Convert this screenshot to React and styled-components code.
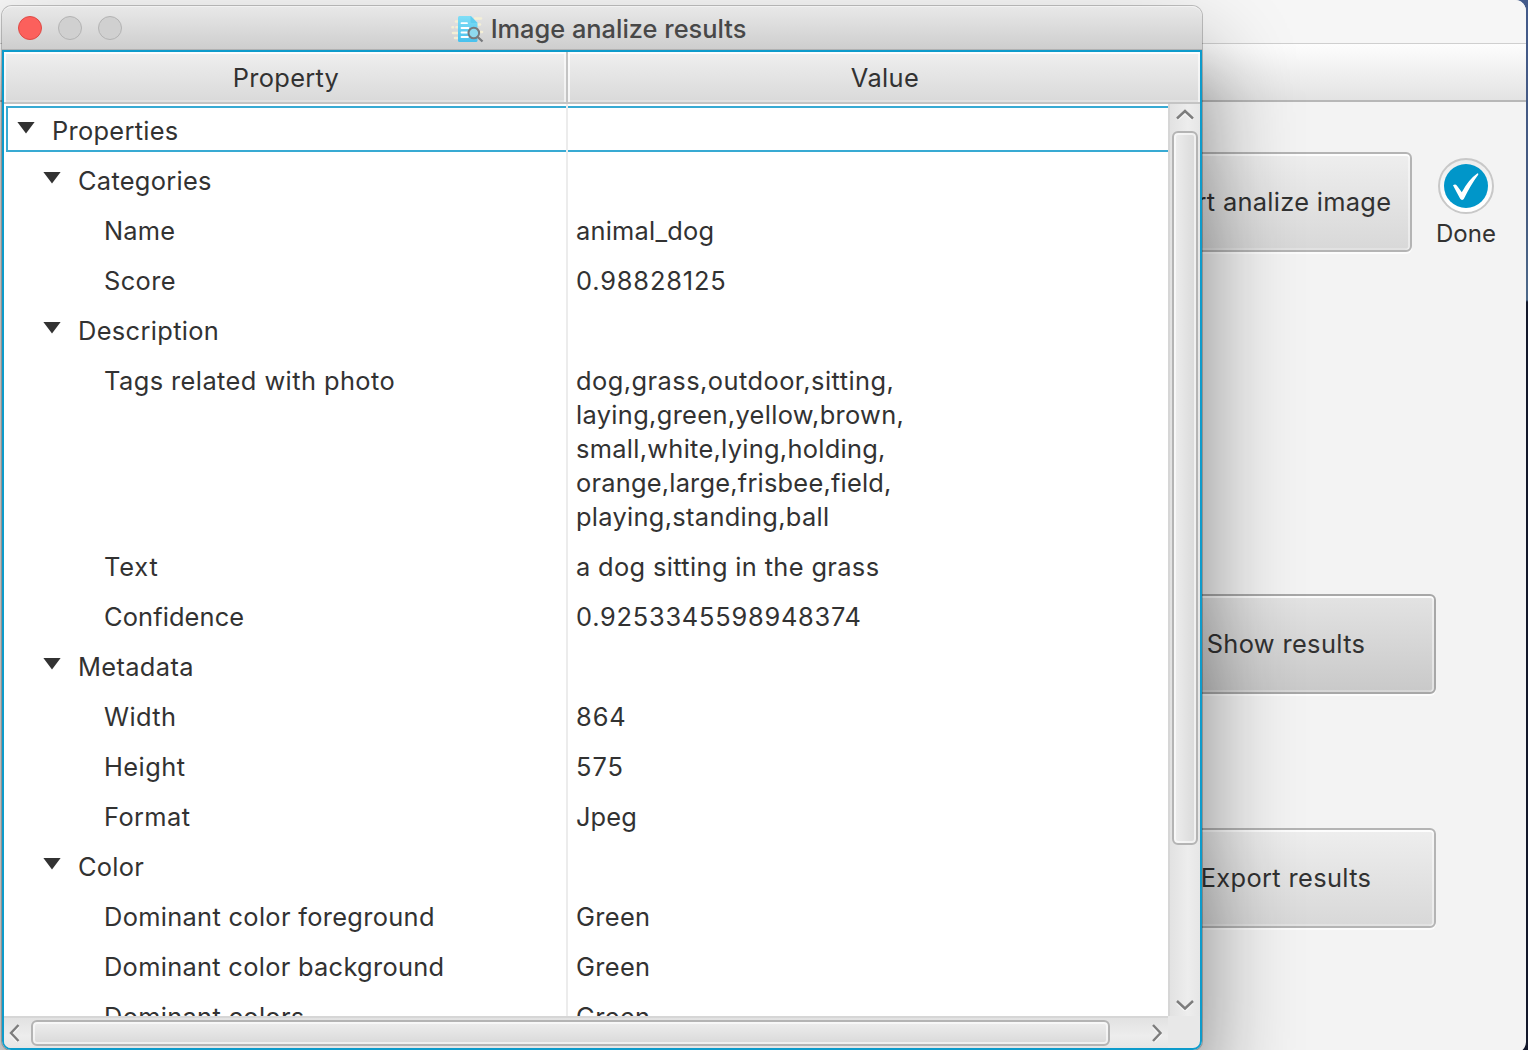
import React from 'react';
import styled, { createGlobalStyle, css } from 'styled-components';

const GlobalStyle = createGlobalStyle`
  * { box-sizing: border-box; }
  body { margin: 0; overflow: hidden; }
`;

const FONT = 'Inter, "Liberation Sans", sans-serif';

const Desktop = styled.main`
  position: relative;
  width: 1528px;
  height: 1050px;
  overflow: hidden;
  background: linear-gradient(#435a8a 0, #44597f 200px, #4c6889 300px, #12172a 302px, #12172a 100%);
  font-family: ${FONT};
  color: #323232;
`;

const Label = styled.span`
  font-size: ${p => p.$size || 25.4}px;
  line-height: 34px;
  letter-spacing: ${p => p.$spacing ?? 0.36}px;
  white-space: nowrap;
`;

/* ---------- main application window (behind) ---------- */

const MainWindow = styled.section`
  position: absolute;
  left: -300px;
  top: 0;
  width: 1826px;
  height: 1053px;
  border-radius: 11px;
  overflow: hidden;
  background: #f3f3f3;
  display: flex;
  flex-direction: column;
`;

const MainTitle = styled.header`
  flex: none;
  height: 44px;
  background: #f6f6f6;
  border-bottom: 1px solid #cfcfcf;
`;

const MenuBar = styled.nav`
  flex: none;
  height: 58px;
  background: linear-gradient(#fdfdfd, #e3e3e3);
  border-bottom: 2px solid #b7b7b7;
`;

const Actions = styled.div`
  flex: 1;
  display: flex;
  flex-direction: column;
  align-items: flex-end;
  padding: 50px 90px 0 0;
`;

const AnalyzeRow = styled.div`
  display: flex;
  align-items: flex-start;
  gap: 24px;
  margin: 0 -60px 342px 0;
`;

const ActionButton = styled.button`
  flex: none;
  width: ${p => p.$width || 300}px;
  height: 100px;
  margin: 0 0 ${p => p.$after || 0}px;
  padding: 0;
  border: 2px solid ${p => (p.$hover ? '#a7a7a7' : '#b4b4b4')};
  border-radius: 6px;
  background: ${p => (p.$hover
    ? 'linear-gradient(#e3e3e3, #c9c9c9)'
    : 'linear-gradient(#eeeeee, #d8d8d8)')};
  box-shadow:
    inset 0 2px 0 rgba(255, 255, 255, 0.85),
    inset -2px 0 0 rgba(255, 255, 255, 0.45),
    inset 0 -2px 0 rgba(255, 255, 255, 0.25),
    0 2px 0 #fcfcfc;
  font-family: inherit;
  color: inherit;
`;

const Status = styled.div`
  display: flex;
  flex-direction: column;
  align-items: center;
  width: 60px;
  padding-top: 6px;
`;

const Badge = styled.div`
  width: 56px;
  height: 56px;
  border-radius: 50%;
  border: 2px solid #c8c8c8;
  background: linear-gradient(#ececec, #ffffff 80%);
  display: grid;
  place-items: center;
  margin-bottom: 3px;
`;

/* ---------- results window (front) ---------- */

const ResultsWindow = styled.section`
  position: absolute;
  left: 2px;
  top: 6px;
  width: 1200px;
  height: 1044px;
  border-radius: 10px 10px 9px 9px;
  display: flex;
  flex-direction: column;
  box-shadow: 0 0 0 1px rgba(0, 0, 0, 0.22), 0 52px 94px rgba(0, 0, 0, 0.48);
`;

const TitleBar = styled.header`
  flex: none;
  height: 44px;
  display: grid;
  grid-template-columns: 120px 1fr 127px;
  align-items: center;
  border-radius: 10px 10px 0 0;
  background: linear-gradient(#e8e8e8, #cecece);
  border-top: 1px solid #f2f2f2;
  border-bottom: 1px solid #b1b1b1;
`;

const Lights = styled.div`
  display: flex;
  gap: 16px;
  padding-left: 16px;
`;

const Light = styled.i`
  width: 24px;
  height: 24px;
  border-radius: 50%;
  background: ${p => (p.$close ? '#fc605c' : '#d0d0d0')};
  border: 1px solid ${p => (p.$close ? '#de4a45' : '#b3b3b3')};
`;

const TitleText = styled.h1`
  margin: 0;
  padding-top: 1px;
  display: flex;
  justify-content: center;
  align-items: center;
  gap: 7px;
  font-weight: 450;
  color: #484848;
`;

const Frame = styled.div`
  flex: 1;
  min-height: 0;
  border: 2px solid #0d9bcb;
  border-radius: 0 0 9px 9px;
  overflow: hidden;
  background: #e8e8e8;
  display: flex;
  flex-direction: column;
`;

const HeaderRow = styled.div`
  flex: none;
  display: grid;
  grid-template-columns: 564px 1fr;
  height: 52px;
  border-bottom: 2px solid #c4c4c4;
`;

const HeaderCell = styled.div`
  display: grid;
  place-items: center;
  padding: 1px 0 0 2px;
  background: linear-gradient(#efefef, #d9d9d9);
  box-shadow:
    inset 0 2px 0 #fdfdfd,
    inset 2px 0 0 rgba(255, 255, 255, 0.75),
    inset -2px 0 0 rgba(255, 255, 255, 0.6),
    inset 0 -2px 0 rgba(255, 255, 255, 0.25);
  &:first-child {
    margin-right: 2px;
    outline: 2px solid #c4c4c4;
    clip-path: inset(0 -2px 0 0);
  }
`;

const Body = styled.div`
  flex: 1;
  min-height: 0;
  display: grid;
  grid-template-columns: 1164px 32px;
  grid-template-rows: 912px 32px;
`;

const Rows = styled.div`
  background: #fff;
  overflow: hidden;
  min-height: 0;
`;

const Row = styled.div`
  display: grid;
  grid-template-columns: 564px 600px;
`;

const Cell = styled.div`
  display: flex;
  &:first-child { border-right: 2px solid #ececec; }
`;

const CellInner = styled.div`
  flex: 1;
  display: flex;
  align-items: flex-start;
  padding: 10px 0 6px ${p => p.$indent}px;
  ${p => p.$focus && css`
    margin: 2px 0;
    padding: 6px 0 2px ${p.$indent - 4}px;
    border: solid #38aad3;
    border-width: 2px 0;
    ${Cell}:first-child > & { margin-left: 2px; border-left-width: 2px; }
  `}
`;

const Arrow = styled.i`
  width: 18px;
  height: 12px;
  margin: 7.500px 17px 0 -35px;
  background: #323232;
  clip-path: polygon(0 0, 100% 0, 50% 100%);
`;

const Lines = styled.div`
  display: flex;
  flex-direction: column;
`;

const VScroll = styled.div`
  border-left: 2px solid #d6d6d6;
  background: linear-gradient(90deg, #e2e2e2, #ededed 60%, #e6e6e6);
  display: flex;
  flex-direction: column;
  align-items: center;
  padding: 5px 0 5px;
`;

const HScroll = styled.div`
  border-top: 2px solid #d6d6d6;
  background: linear-gradient(#e2e2e2, #ededed 60%, #e6e6e6);
  display: flex;
  align-items: center;
  padding: 0 5px 0 5px;
`;

const thumb = css`
  flex: none;
  border: 2px solid #b4b4b4;
  border-radius: 6px;
  box-shadow: inset 0 0 0 2px rgba(255, 255, 255, 0.6);
`;

const VThumb = styled.div`
  ${thumb}
  width: 26px;
  height: 714px;
  margin: 11px 0 auto;
  background: linear-gradient(90deg, #eeeeee, #d9d9d9);
`;

const HThumb = styled.div`
  ${thumb}
  width: 1079px;
  height: 26px;
  margin: 0 auto 0 11px;
  background: linear-gradient(#eeeeee, #d9d9d9);
`;

const CHEVRONS = {
  up: 'M1 9.5 L9 2 L17 9.5',
  down: 'M1 1 L9 8.5 L17 1',
  left: 'M9.5 1 L2 9 L9.5 17',
  right: 'M1 1 L8.5 9 L1 17',
};

const Chevron = ({ dir }) => {
  const vertical = dir === 'up' || dir === 'down';
  const [w, h] = vertical ? [18, 11] : [11, 18];
  return (
    <svg width={w} height={h} viewBox={`0 0 ${w} ${h}`} fill="none">
      <path d={CHEVRONS[dir]} stroke="#fff" strokeWidth="2" transform="translate(0 2)" opacity=".6" />
      <path d={CHEVRONS[dir]} stroke="#7d7d7d" strokeWidth="2.4" />
    </svg>
  );
};

const DocumentSearchIcon = () => (
  <svg width="33" height="28" viewBox="0 0 33 28" fill="none">
    <g stroke="#f4efd6" strokeWidth="2.6" strokeLinecap="round">
      <path d="M5 6.500h3M1.500 12.200h0.500M5.500 12.200h3M2 18h5M4 23h4M24 3.500h6M26 9.500h3M28 17h3" />
    </g>
    <defs>
      <linearGradient id="page" x1="0" y1="0" x2="0" y2="1">
        <stop offset="0" stopColor="#80def6" />
        <stop offset="1" stopColor="#48c1ee" />
      </linearGradient>
    </defs>
    <path d="M8.500 1H20L26.500 8V25.500Q26.500 27 25 27H8.500Q7 27 7 25.500V2.500Q7 1 8.500 1Z" fill="url(#page)" />
    <path d="M19.500 1L26.500 8H21Q19.500 8 19.500 6.500Z" fill="#5fcdef" />
    <path d="M10.500 8.200h5.500M10.500 13h7M10.500 17.500h6M10.500 22h6.500" stroke="#fff" strokeWidth="1.8" strokeLinecap="round" />
    <circle cx="22.800" cy="18" r="5.300" fill="#8fd9ee" stroke="#77797c" strokeWidth="2" />
    <path d="M26.700 22L31.500 26.500" stroke="#77797c" strokeWidth="2.300" />
  </svg>
);

const CheckIcon = () => (
  <svg width="44" height="44" viewBox="0 0 44 44">
    <circle cx="22" cy="22" r="22" fill="#0096c9" />
    <path d="M9 21.200Q11.500 19.600 13 21.800L17.800 28.200Q24.500 15.500 33.500 9.200Q34.800 9.200 34.200 10.800Q27 20.500 19.800 35Q17.800 37 16.200 34.800Q12.500 28 9 21.200Z" fill="#fff" />
  </svg>
);

const ROWS = [
  { level: 0, name: 'Properties', ls: 0.3, open: true, focus: true },
  { level: 1, name: 'Categories', ls: 0.3, open: true },
  { level: 2, name: 'Name', ls: 0.2, value: [['animal_dog', 0.22]] },
  { level: 2, name: 'Score', ls: 0.4, value: [['0.98828125', 0.85]] },
  { level: 1, name: 'Description', ls: 0.35, open: true },
  {
    level: 2,
    name: 'Tags related with photo',
    ls: 0.43,
    value: [
      ['dog,grass,outdoor,sitting,', 0.46],
      ['laying,green,yellow,brown,', 0.34],
      ['small,white,lying,holding,', 0.29],
      ['orange,large,frisbee,field,', 0.22],
      ['playing,standing,ball', 0.31],
    ],
  },
  { level: 2, name: 'Text', ls: 0.8, value: [['a dog sitting in the grass', 0.36]] },
  { level: 2, name: 'Confidence', ls: 0.12, value: [['0.9253345598948374', 0.76]] },
  { level: 1, name: 'Metadata', ls: 0.36, open: true },
  { level: 2, name: 'Width', ls: 0.4, value: [['864', 0.95]] },
  { level: 2, name: 'Height', ls: 0.45, value: [['575', 0.95]] },
  { level: 2, name: 'Format', ls: 0.4, value: [['Jpeg', 0.1]] },
  { level: 1, name: 'Color', ls: 0.25, open: true },
  { level: 2, name: 'Dominant color foreground', ls: 0.32, value: [['Green', 0.35]] },
  { level: 2, name: 'Dominant color background', ls: 0.3, value: [['Green', 0.35]] },
  { level: 2, name: 'Dominant colors', ls: 0.32, value: [['Green', 0.35]] },
];

const TreeRow = ({ row }) => (
  <Row>
    <Cell>
      <CellInner $indent={48 + row.level * 26} $focus={row.focus}>
        {row.open && <Arrow />}
        <Label $spacing={row.ls}>{row.name}</Label>
      </CellInner>
    </Cell>
    <Cell>
      <CellInner $indent={8} $focus={row.focus}>
        <Lines>
          {(row.value || []).map(([text, ls]) => (
            <Label key={text} $spacing={ls}>{text}</Label>
          ))}
        </Lines>
      </CellInner>
    </Cell>
  </Row>
);

export default function App() {
  return (
    <Desktop>
      <GlobalStyle />
      <MainWindow>
        <MainTitle />
        <MenuBar />
        <Actions>
          <AnalyzeRow>
            <ActionButton $width={276}><Label $spacing={0.3}>Start analize image</Label></ActionButton>
            <Status>
              <Badge><CheckIcon /></Badge>
              <Label $size={24} $spacing={0}>Done</Label>
            </Status>
          </AnalyzeRow>
          <ActionButton $hover $after={134}><Label>Show results</Label></ActionButton>
          <ActionButton><Label>Export results</Label></ActionButton>
        </Actions>
      </MainWindow>

      <ResultsWindow>
        <TitleBar>
          <Lights><Light $close /><Light /><Light /></Lights>
          <TitleText>
            <DocumentSearchIcon />
            <Label $spacing={0}>Image analize results</Label>
          </TitleText>
        </TitleBar>
        <Frame>
          <HeaderRow>
            <HeaderCell><Label $spacing={0.3}>Property</Label></HeaderCell>
            <HeaderCell><Label $spacing={0.4}>Value</Label></HeaderCell>
          </HeaderRow>
          <Body>
            <Rows>{ROWS.map(row => <TreeRow key={row.name} row={row} />)}</Rows>
            <VScroll><Chevron dir="up" /><VThumb /><Chevron dir="down" /></VScroll>
            <HScroll><Chevron dir="left" /><HThumb /><Chevron dir="right" /></HScroll>
          </Body>
        </Frame>
      </ResultsWindow>
    </Desktop>
  );
}
